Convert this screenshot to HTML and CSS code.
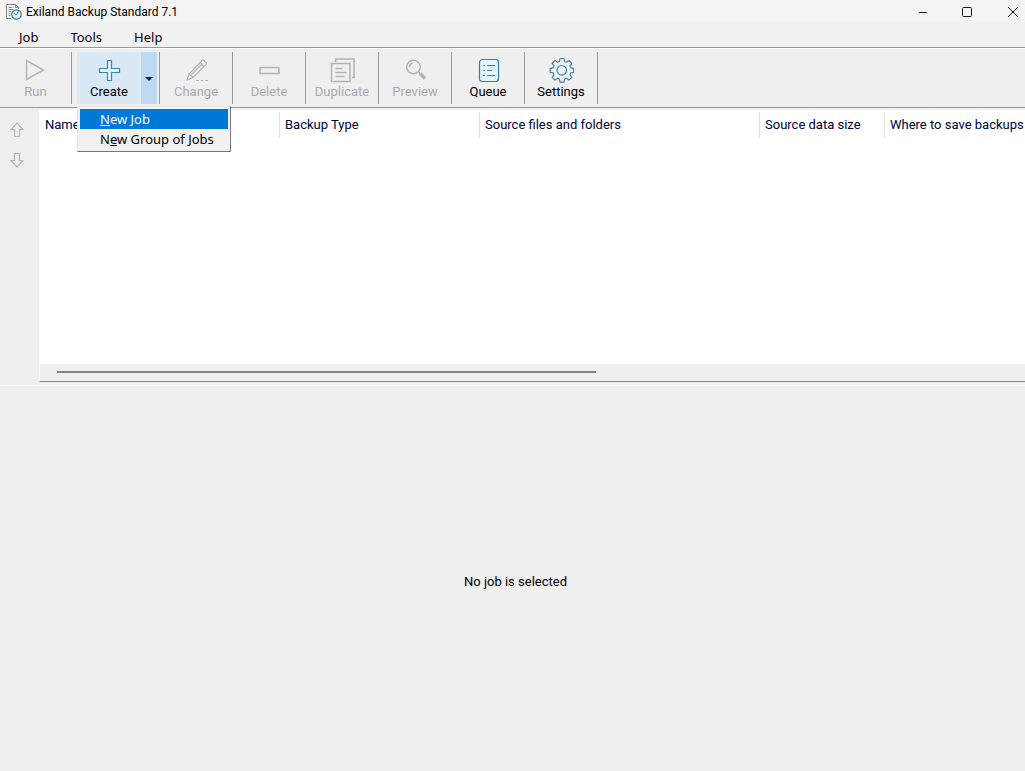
FILE: index.html
```html
<!DOCTYPE html>
<html lang="en">
<head>
    <meta charset="UTF-8">
    <meta name="viewport" content="width=device-width, initial-scale=1.0">
    <title>Exiland Backup Standard 7.1</title>
    <link rel="stylesheet" href="styles.css">
</head>
<body>

<header class="titlebar">
    <svg class="app-icon" width="16" height="16" viewBox="0 0 16 16" fill="none">
        <path d="M5 14.5H.5V.5h9l3 3V5M9.5.5v3h3M2.5 3.5h4M2.5 5.5h5M2.5 7.5h3M2.5 9.5h2M2.5 11.5h2" stroke="#888"/>
        <circle cx="10.5" cy="10.5" r="4.7" fill="#e4f3fb" stroke="#3b7c9c" stroke-width="1.3"/>
        <path d="M10 11l2.5-3.5M10 11L8.5 9.5" stroke="#3b7c9c"/>
    </svg>
    <h1>Exiland Backup Standard 7.1</h1>
    <div class="window-buttons">
        <button type="button" aria-label="Minimize">
            <svg width="12" height="12" viewBox="0 0 12 12"><path d="M2 6.5h8" stroke="#111"/></svg>
        </button>
        <button type="button" aria-label="Maximize">
            <svg width="12" height="12" viewBox="0 0 12 12"><rect x="0.5" y="1.5" width="9" height="9" rx="1" fill="none" stroke="#111"/></svg>
        </button>
        <button type="button" aria-label="Close">
            <svg width="12" height="12" viewBox="0 0 12 12"><path d="M1 1l10 10M11 1L1 11" stroke="#111"/></svg>
        </button>
    </div>
</header>

<nav class="menubar">
    <button type="button">Job</button>
    <button type="button">Tools</button>
    <button type="button">Help</button>
</nav>

<div class="toolbar">
    <div class="tool first">
        <button type="button" disabled>
            <svg width="26" height="26" viewBox="0 0 26 26" fill="none" stroke="#b4b4b4" stroke-width="1.5"><path d="M3.5 3.5v19L20.5 13z"/></svg>
            Run
        </button>
    </div>
    <div class="tool create">
        <button type="button" class="create-main">
            <svg width="26" height="26" viewBox="0 0 26 26" fill="#e4f6ff" stroke="#3b86ad" stroke-width="1.2"><path d="M11.5 3.5h4v8h8v4h-8v8h-4v-8h-8v-4h8z"/></svg>
            Create
        </button>
        <button type="button" class="create-arrow" aria-label="More create options" aria-expanded="true">
            <svg width="8" height="4" viewBox="0 0 8 4"><path d="M0 0h8L4 4z" fill="#123"/></svg>
        </button>
        <div class="dropdown" role="menu">
            <button type="button" role="menuitem" class="selected"><u>N</u>ew Job</button>
            <button type="button" role="menuitem">N<u>e</u>w Group of Jobs</button>
        </div>
    </div>
    <div class="tool">
        <button type="button" disabled>
            <svg width="26" height="26" viewBox="0 0 26 26" fill="none" stroke="#b4b4b4" stroke-width="1.2"><path d="M4 23l2-6L19 3.5q1-1 2 0l2 2q1 1 0 2L10 20.5zM6 17l4 3.5M17 5.5l4 4M8.5 17.5L19 7"/><path d="M13 23.5h12" stroke-dasharray="3 1.5"/></svg>
            Change
        </button>
    </div>
    <div class="tool">
        <button type="button" disabled>
            <svg width="26" height="26" viewBox="0 0 26 26" fill="none" stroke="#b4b4b4" stroke-width="1.5"><path d="M4 10.5h19v6H4z"/></svg>
            Delete
        </button>
    </div>
    <div class="tool">
        <button type="button" disabled>
            <svg width="26" height="26" viewBox="0 0 26 26" fill="none" stroke="#b4b4b4" stroke-width="1.5"><path d="M2.5 6.5H21v18H2.500zM6.500 5V2H25v18.500h-2"/><path d="M6.500 11.500h7M6.500 15.500h11M6.500 19.500h9"/></svg>
            Duplicate
        </button>
    </div>
    <div class="tool">
        <button type="button" disabled>
            <svg width="26" height="26" viewBox="0 0 26 26" fill="none" stroke="#b4b4b4" stroke-width="1.5"><circle cx="11.500" cy="10" r="6.800"/><path d="M7.500 10q0-3 3-4M16.500 15l2 2"/><path d="M18 16.500l5 5" stroke-width="3.500"/></svg>
            Preview
        </button>
    </div>
    <div class="tool">
        <button type="button">
            <svg width="26" height="26" viewBox="0 0 26 26" fill="none" stroke="#3b7c9c" stroke-width="1.2"><rect x="4.500" y="2.500" width="19" height="22" rx="3" fill="#e4f6ff"/><path d="M8 8.500h2M12 8.500h8M8 13.500h2M12 13.500h5M8 18.500h2M12 18.500h8"/></svg>
            Queue
        </button>
    </div>
    <div class="tool">
        <button type="button">
            <svg width="26" height="26" viewBox="0 0 26 26" fill="#e9f6fc" stroke="#557f94" stroke-width="1.2" stroke-linejoin="round"><path d="M11.500 4.500L12 1.500h4l.5 3 2 .8 2.500-1.800 2.800 2.800-1.800 2.500.8 2 2.700.5v4l-2.700.5-.8 2 1.800 2.500-2.800 2.800-2.500-1.800-2 .8-.5 3h-4l-.5-3-2-.8L7 23.100l-2.800-2.800L6 17.800l-.8-2-3-.5v-4l3-.5.8-2-1.800-2.500L7 3.500l2.500 1.800z"/><circle cx="13.800" cy="13.300" r="4.800"/></svg>
            Settings
        </button>
    </div>
</div>

<main>
    <section class="jobs">
        <div class="order-buttons">
            <button type="button" aria-label="Move up" disabled>
                <svg width="14" height="16" viewBox="0 0 14 16" fill="none" stroke="#b4b4b4" stroke-width="1.2"><path d="M7 1L1 7.500h3.500v7h5v-7H13z"/></svg>
            </button>
            <button type="button" aria-label="Move down" disabled>
                <svg width="14" height="16" viewBox="0 0 14 16" fill="none" stroke="#b4b4b4" stroke-width="1.2"><path d="M7 15L1 8.500h3.500v-7h5v7H13z"/></svg>
            </button>
        </div>
        <div class="job-list">
            <div class="table-area">
                <table>
                    <thead>
                        <tr>
                            <th class="col-name">Name</th>
                            <th class="col-type">Backup Type</th>
                            <th class="col-source">Source files and folders</th>
                            <th class="col-size">Source data size</th>
                            <th class="col-target">Where to save backups</th>
                        </tr>
                    </thead>
                    <tbody></tbody>
                </table>
            </div>
            <div class="scrollbar">
                <div class="thumb" style="width: 56.7%"></div>
            </div>
        </div>
    </section>

    <section class="details">
        <p>No job is selected</p>
    </section>
</main>

</body>
</html>
```
FILE: styles.css
```css
* {
    box-sizing: border-box;
}

body {
    margin: 0;
    min-height: 100vh;
    display: flex;
    flex-direction: column;
    background-color: #efefef;
    color: #000;
    font-family: Roboto, sans-serif;
    font-size: 13px;
    line-height: 20px;
    overflow: hidden;
}

button {
    margin: 0;
    padding: 0;
    border: none;
    background: none;
    color: inherit;
    font: inherit;
}

svg {
    display: block;
}

/* Title bar */
.titlebar {
    display: flex;
    align-items: center;
    height: 23px;
    padding-left: 6px;
    background-color: #f3f3f3;
}

.titlebar h1 {
    margin: 0 0 0 4px;
    font-size: 12px;
    font-weight: normal;
}

.window-buttons {
    display: flex;
    margin-left: auto;
}

.window-buttons button {
    display: flex;
    justify-content: center;
    width: 45px;
}

.window-buttons button:last-child {
    width: 24px;
    margin-left: 11px;
}

/* Menu */
.menubar {
    display: flex;
    gap: 32px;
    height: 25px;
    padding: 4px 19px 0;
    background-color: #f1f1f1;
    border-bottom: 1px solid #999;
    font-family: "Noto Sans", sans-serif;
}

/* Toolbar */
.toolbar {
    display: flex;
    height: 60px;
    padding: 3px 0;
    border-top: 1px solid #fff;
    border-bottom: 1px solid #999;
}

.tool {
    display: flex;
    width: 73px;
    border-right: 1px solid #999;
}

.tool.first {
    width: 72px;
}

.tool button {
    display: flex;
    flex-direction: column;
    align-items: center;
    flex: 1;
    padding-top: 5px;
    line-height: 18px;
}

.tool button:disabled {
    color: #aaa;
}

.tool.create {
    position: relative;
    width: 88px;
    padding: 0 2px 0 5px;
}

.tool .create-main {
    background-color: #d9e8f5;
}

.tool .create-arrow {
    flex: 0 0 16px;
    justify-content: center;
    padding-top: 2px;
    background-color: #bcdaf1;
}

.dropdown {
    position: absolute;
    top: 54px;
    left: 5px;
    z-index: 1;
    width: 154px;
    padding: 2px;
    background-color: #f1f1f1;
    border: 1px solid #e4e4e4;
    border-right-color: #777;
    border-bottom-color: #777;
    font-family: "Noto Sans", sans-serif;
}

.tool .dropdown button {
    display: block;
    width: 100%;
    height: 20px;
    padding: 0 0 0 20px;
    text-align: left;
}

.tool .dropdown .selected {
    background-color: #0078d7;
    color: #fff;
}

/* Jobs */
main {
    flex: 1;
    display: flex;
    flex-direction: column;
}

.jobs {
    display: flex;
    flex: 0 0 278px;
    padding-top: 2px;
    padding-bottom: 3px;
    border-bottom: 1px solid #fff;
}

.order-buttons {
    display: flex;
    flex-direction: column;
    align-items: center;
    gap: 14px;
    width: 39px;
    padding: 12px 5px 0 0;
}

.job-list {
    flex: 1;
    display: flex;
    flex-direction: column;
    min-width: 0;
    border-left: 1px solid #fafafa;
    border-bottom: 1px solid #888;
}

.table-area {
    flex: 1;
    padding-top: 2px;
    overflow: hidden;
    background-color: #fff;
}

table {
    width: 1045px;
    table-layout: fixed;
    border-collapse: separate;
    border-spacing: 0;
}

th {
    height: 26px;
    padding: 0 0 0 5px;
    border-right: 1px solid #e2e2e2;
    color: #00003c;
    font-weight: normal;
    text-align: left;
    white-space: nowrap;
}

.col-name {
    width: 240px;
}

.col-type {
    width: 200px;
}

.col-source {
    width: 280px;
}

.col-size {
    width: 125px;
}

.col-target {
    width: 200px;
}

.scrollbar {
    height: 17px;
    padding: 7px 17px 0;
}

.thumb {
    height: 2px;
    background-color: #858585;
}

/* Details */
.details {
    flex: 1;
    display: flex;
    align-items: center;
    justify-content: center;
    padding: 6px 0 0 6px;
}

.details p {
    margin: 0;
}
```
